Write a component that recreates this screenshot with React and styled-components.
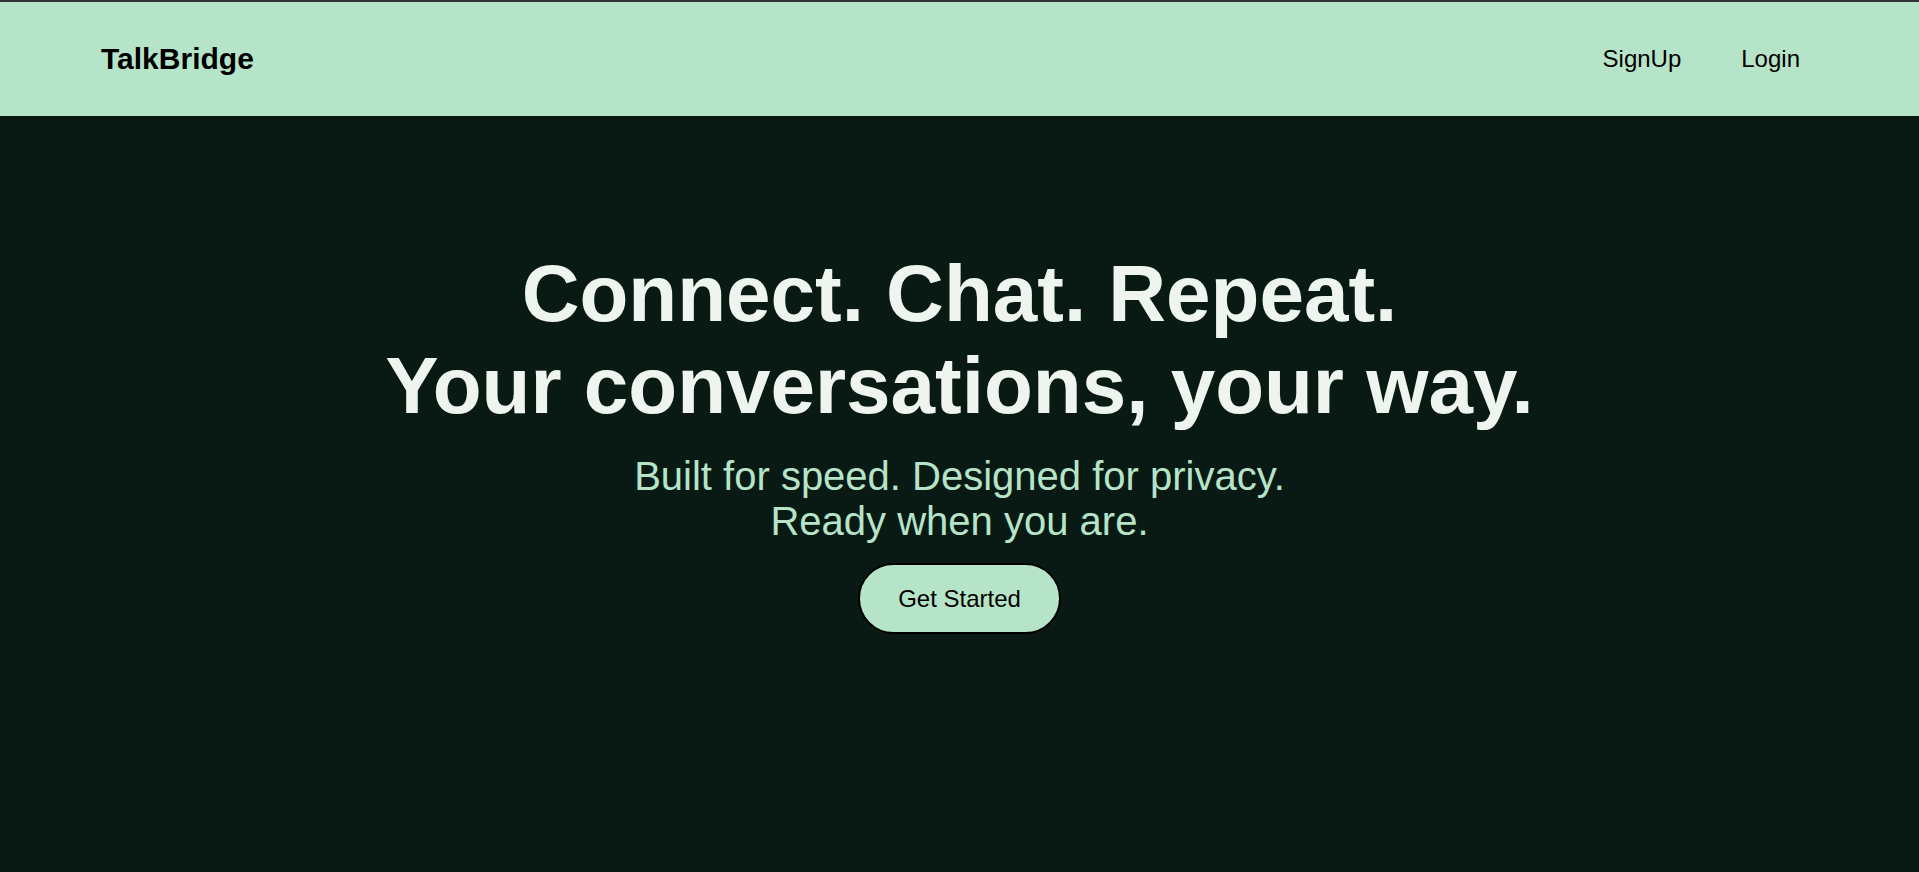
import styled, { createGlobalStyle } from 'styled-components';

const GlobalStyle = createGlobalStyle`
  html, body {
    margin: 0;
    padding: 0;
  }
  body {
    background-color: #091a15;
    font-family: 'Liberation Sans', Arial, sans-serif;
  }
`;

const Page = styled.div`
  min-height: 100vh;
  background-color: #091a15;
  border-top: 2px solid #333333;
  box-sizing: border-box;
`;

const Header = styled.header`
  display: flex;
  justify-content: space-between;
  align-items: center;
  height: 114px;
  padding: 0 119px 0 101px;
  background-color: #b6e4c8;
`;

const Logo = styled.div`
  font-size: 30px;
  font-weight: bold;
  color: #000000;
`;

const Nav = styled.nav`
  display: flex;
  align-items: center;
  gap: 60px;
`;

const NavLink = styled.a`
  font-size: 24px;
  color: #000000;
  text-decoration: none;
  cursor: pointer;
`;

const Hero = styled.main`
  display: flex;
  flex-direction: column;
  align-items: center;
  padding-top: 132px;
  text-align: center;
`;

const Title = styled.h1`
  margin: 0;
  font-size: 80px;
  font-weight: bold;
  color: #eef4ee;
`;

const Sub = styled.p`
  margin: 22px 0 0 0;
  font-size: 40px;
  line-height: 45px;
  color: #b6e4c8;
`;

const StartButton = styled.button`
  margin-top: 19px;
  width: 203px;
  height: 71px;
  border: 2px solid #000000;
  border-radius: 36px;
  background-color: #b6e4c8;
  font-family: 'Liberation Sans', Arial, sans-serif;
  font-size: 24px;
  color: #000000;
  cursor: pointer;
`;

const App = () => {
  return (
    <>
      <GlobalStyle />
      <Page>
        <Header>
          <Logo>TalkBridge</Logo>
          <Nav>
            <NavLink>SignUp</NavLink>
            <NavLink>Login</NavLink>
          </Nav>
        </Header>

        <Hero>
          <Title>
            Connect. Chat. Repeat.
            <br />
            Your conversations, your way.
          </Title>
          <Sub>
            Built for speed. Designed for privacy.
            <br />
            Ready when you are.
          </Sub>
          <StartButton>Get Started</StartButton>
        </Hero>
      </Page>
    </>
  );
};

export default App;
